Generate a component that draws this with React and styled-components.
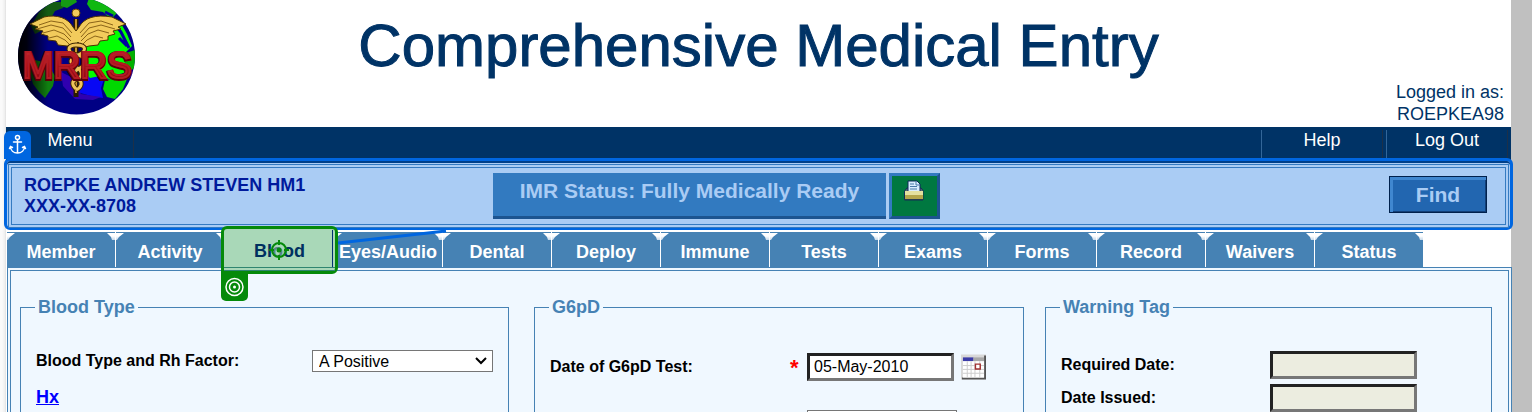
import React from 'react';
import styled, { createGlobalStyle } from 'styled-components';

const Global = createGlobalStyle`
  *, *::before, *::after { box-sizing: border-box; }
  body { margin: 0; background: #c0c0c0; font-family: "Liberation Sans", Arial, sans-serif; }
  #root { height: 100vh; overflow: hidden; }
  button, input, select { font-family: inherit; }
`;

const Window = styled.div`
  display: flex;
  height: 100%;
  padding-right: 21px;
`;
const Edge = styled.div`
  flex: 0 0 6px;
  background: linear-gradient(to right, #fafafa 2px, #eeeeee 5px, #dddddd);
`;
const Page = styled.main`
  flex: 1;
  min-width: 0;
  display: flex;
  flex-direction: column;
  background: #fff;
`;

const Header = styled.header`
  flex: none;
  display: grid;
  grid-template-columns: 180px 1fr 180px;
  height: 127px;
`;
const Logo = styled.svg`
  display: block;
  width: 120px;
  height: 116px;
  margin-left: 11px;
`;
const Title = styled.h1`
  margin: 12px 0 0;
  text-align: center;
  font-size: 60px;
  line-height: 68px;
  font-weight: 400;
  color: #003366;
  -webkit-text-stroke: 1px #003366;
  white-space: nowrap;
`;
const Login = styled.p`
  align-self: end;
  margin: 0;
  padding: 0 7px 2px 0;
  text-align: right;
  font-size: 18px;
  line-height: 22px;
  color: #003366;
`;

const Nav = styled.nav`
  flex: none;
  display: flex;
  height: 36px;
  background: #003366;
`;
const NavLink = styled.a`
  width: 122px;
  height: 28px;
  margin: 3px 3px 0 0;
  color: #fff;
  font-size: 18px;
  line-height: 20px;
  text-align: center;
  text-decoration: none;
  border-left: 1px solid #336699;
  border-right: 1px solid #1d3048;
`;
const MenuLink = styled(NavLink)`
  width: 128px;
  border-left-color: transparent;
`;
const Spacer = styled.div`flex: 1;`;

const PatientBar = styled.section`
  flex: none;
  position: relative;
  display: flex;
  align-items: flex-start;
  height: 72px;
  margin: -5px -2px 0;
  border: 3px solid #0066e0;
  border-radius: 6px;
  background: #aaccf4;
  box-shadow: inset 0 2px #00408a;
  padding: 3px 1px 0;
`;
const PatientFrame = styled.div`
  flex: 1;
  display: flex;
  height: 64px;
  padding: 5px 18px 0 12px;
  border: 4px double #357bc1;
`;
const Patient = styled.div`
  flex: 6 1 0;
  font-size: 18px;
  line-height: 21px;
  font-weight: 700;
  padding-top: 2px;
  color: #001a9c;
`;
const StatusGroup = styled.div`
  display: flex;
  gap: 3px;
`;
const ImrStatus = styled.div`
  width: 393px;
  height: 46px;
  background: #327ac0;
  border-bottom: 3px solid #1c5490;
  color: #aaccf4;
  font-size: 21px;
  line-height: 36px;
  font-weight: 700;
  text-align: center;
`;
const PrintButton = styled.button`
  display: flex;
  justify-content: center;
  width: 51px;
  height: 46px;
  padding: 4px 0 0;
  background: #007840;
  border: 3px solid;
  border-color: #327ac0 #1c5490 #1c5490 #327ac0;
`;
const FindSide = styled.div`
  flex: 7 1 0;
  display: flex;
  justify-content: flex-end;
  padding-top: 3px;
`;
const FindButton = styled.button`
  width: 98px;
  height: 37px;
  padding: 0;
  border: 1px solid #00214d;
  background: #2266b0;
  box-shadow: inset 3px 3px #4087d0, inset -1px -1px #123f78;
  color: #aaccf4;
  font-size: 21px;
  line-height: 24px;
  font-weight: 700;
`;

const TabBar = styled.div`
  flex: none;
  position: relative;
  display: flex;
  height: 35px;
  margin-top: 2px;
`;
const Tab = styled.button`
  position: relative;
  flex: 0 0 109px;
  padding: 2px 0 0;
  border: 0;
  border-left: 1px solid #fff;
  background: #4682b4;
  color: #fff;
  font-size: 18px;
  line-height: 37px;
  font-weight: 700;
  white-space: nowrap;
  &::before,
  &::after {
    content: "";
    position: absolute;
    top: 0;
    width: 8px;
    height: 8px;
    background: linear-gradient(#fff 4px, #c4d8ea);
  }
  &::before {
    left: 0;
    clip-path: polygon(0 1px, 100% 1px, 3px 5px, 1px 100%, 0 100%);
  }
  &::after {
    right: 0;
    clip-path: polygon(0 1px, 100% 1px, 100% 100%, 5px 100%, 4px 5px);
  }
`;

const Highlight = styled.div`
  position: absolute;
  left: 215px;
  top: -6px;
  width: 117px;
  height: 48px;
  border: 3px solid #058a0a;
  border-radius: 6px 6px 6px 0;
  background: #a9d8b8;
  color: #003060;
  font-size: 18px;
  font-weight: 700;
  line-height: 44px;
  text-align: center;
  &::before {
    content: "";
    position: absolute;
    left: 0;
    right: 0;
    bottom: 0;
    height: 4px;
    border-top: 1px solid #2f8570;
    border-bottom: 1px solid #2f8570;
  }
  &::after {
    content: "";
    position: absolute;
    right: 2px;
    top: 1px;
    bottom: 4px;
    width: 1px;
    background: #003070;
  }
`;
const Target = styled.svg`
  position: absolute;
  left: 45px;
  top: 11px;
  width: 20px;
  height: 20px;
`;
const Badge = styled.svg`
  position: absolute;
  left: ${p => p.$x}px;
  top: ${p => p.$y}px;
  width: 27px;
  height: 28px;
`;
const Connector = styled.svg`
  position: absolute;
  left: 332px;
  top: -4px;
  width: 110px;
  height: 18px;
`;

const Panel = styled.section`
  flex: 1;
  min-height: 0;
  display: grid;
  grid-template-columns: 514fr 511fr 447fr;
  margin: 0 -1px 0 1px;
  padding: 26px 16px 0 9px;
  border: 4px double #4682b4;
  border-bottom: 0;
  background: #f0f8ff;
`;
const Group = styled.fieldset`
  min-width: 0;
  margin: 0 ${p => p.$gap}px 0 0;
  padding: ${p => p.$top}px 15px 0;
  border: 1px solid #4682b4;
  border-bottom: 0;
`;
const Legend = styled.legend`
  margin-left: -1px;
  padding: 0 3px;
  font-size: 18px;
  line-height: 20px;
  font-weight: 700;
  color: #4682b4;
`;
const Row = styled.div`
  display: flex;
  align-items: center;
  height: ${p => p.$height || 33}px;
`;
const Label = styled.label`
  flex: 0 0 ${p => p.$width}px;
  font-size: 16px;
  line-height: 20px;
  font-weight: 700;
  color: #000;
`;
const Star = styled.span`
  width: 22px;
  padding: 2px 0 0 5px;
  color: #f00;
  font-size: 22px;
  line-height: 22px;
  font-weight: 700;
`;
const Field = styled.input`
  width: 147px;
  height: 28px;
  padding: 0 4px;
  border: 3px solid;
  border-color: #222222 #777777 #777777 #222222;
  border-radius: 0;
  background: ${p => (p.readOnly ? '#ecede0' : '#fff')};
  color: #000;
  font-size: 16px;
`;
const SelectBox = styled.span`
  position: relative;
  display: flex;
  svg {
    position: absolute;
    right: 5px;
    top: 6px;
    pointer-events: none;
  }
`;
const Select = styled.select`
  appearance: none;
  width: ${p => p.$width}px;
  height: 22px;
  padding: 0 6px;
  border: 1px solid #767676;
  border-radius: 0;
  background: #fff;
  color: #000;
  font-size: 16px;
`;
const Later = styled.div`
  padding: 27px 0 0 257px;
`;
const History = styled.a`
  font-size: 18px;
  line-height: 20px;
  font-weight: 700;
  color: #0000ff;
  text-decoration: underline;
`;
const IconButton = styled.button`
  display: flex;
  margin-left: 7px;
  padding: 0;
  border: 0;
  background: none;
`;

const MrrsLogo = () => (
  <Logo viewBox="0 0 120 116" role="img" aria-label="MRRS">
    <defs>
      <clipPath id="globe"><circle cx="59.500" cy="56" r="58.500" /></clipPath>
      <linearGradient id="shade">
        <stop offset="0" stopColor="#000" />
        <stop offset="0.08" stopColor="#000" stopOpacity="0.9" />
        <stop offset="0.26" stopColor="#000" stopOpacity="0" />
      </linearGradient>
      <linearGradient id="red" x2="0" y2="1">
        <stop offset="0" stopColor="#d03038" />
        <stop offset="0.5" stopColor="#a81018" />
        <stop offset="1" stopColor="#780008" />
      </linearGradient>
    </defs>
    <g clipPath="url(#globe)">
      <rect width="120" height="116" fill="#000084" />
      <path d="M62 78l14-4 12 2-4 12 2 10-12-2-14-4z" fill="#0808f4" />
      <path d="M44 72l12 6 8 16 20 3-8 3-18-1-12-13z" fill="#3000b0" />
      <path d="M14 26L22 12 34 2h16l-4 6-8 3-4 7-6 4-2 8-8 4z" fill="#145c14" />
      <path d="M44-2h14l2 4-10 6-6-2z" fill="#149a14" />
      <path d="M72-2h14l8 7 6 8-6 6-8-7-12-2-4-6z" fill="#10b810" />
      <path d="M66 46l8-6 14-6 8-12 6-2 8 14 5 12-6 6 4 10-2 10-8 2-8 6-12-4-10 2-6-6z" fill="#00ff00" />
      <path d="M94 20l10 12 8 16M88 12l8 4M102 38l8 8" stroke="#0000a0" strokeWidth="3" fill="none" />
      <path d="M88 80l14-2 8 1-4 10-8 10-8-2-4-8z" fill="#00d800" />
      <path d="M18 60l8 2 6 4 6 10-2 10-8 12-6-6-6-8-4-14z" fill="#108010" />
      <path d="M106 54l12-4v18l-8 4z" fill="#00b000" />
      <rect width="120" height="116" fill="url(#shade)" />
    </g>
    <path d="M59 19v78" stroke="#2a1c00" strokeWidth="5" />
    <path d="M59 19v74" stroke="#c89430" strokeWidth="2" />
    <path d="M56 27C51 18 40 14 27 17l-14 7 8 3-3 2 8 2-2 3 7 2 0 4 8 1 2 4 9 1 7 2 4-6 4 6 7-2 9-1 2-4 8-1 0-4 7-2-2-3 8-2-3-2 8-3-14-7C78 14 67 18 62 27l-3 4z" fill="#f2cb5c" stroke="#4b3200" />
    <path d="M22 25l12-4 12 2 9 10M20 29l14-4 12 3 8 9M26 33l11-3 10 4 7 7M32 38l8-2 8 4 5 5M96 25l-12-4-12 2-9 10M98 29l-14-4-12 3-8 9M92 33l-11-3-10 4-7 7M86 38l-8-2-8 4-5 5" stroke="#8a6418" fill="none" />
    <path d="M59 45c-10 0-9 8 1 10s12 8 3 13-7 8-2 11 4 8-2 11M59 45c11 0 11 6 2 10s-9 8-2 12 7 10 1 12-5 6-1 10" fill="none" stroke="#3c2600" strokeWidth="5" />
    <path d="M59 45c-10 0-9 8 1 10s12 8 3 13-7 8-2 11 4 8-2 11M59 45c11 0 11 6 2 10s-9 8-2 12 7 10 1 12-5 6-1 10" fill="none" stroke="#eec45a" strokeWidth="3" />
    <circle cx="59" cy="13" r="4" fill="#f2cb5c" stroke="#6b4700" />
    <text x="60" y="79" textAnchor="middle" fontFamily="Liberation Sans, Arial, sans-serif" fontSize="37" fill="url(#red)" stroke="#5c0008" strokeWidth="4" paintOrder="stroke">MRRS</text>
    <text x="60" y="78" textAnchor="middle" fontFamily="Liberation Sans, Arial, sans-serif" fontSize="37" fill="url(#red)" stroke="#b41c24" strokeWidth="2" aria-hidden="true">MRRS</text>
  </Logo>
);

const Printer = () => (
  <svg width="22" height="22" viewBox="0 0 22 22" aria-hidden="true">
    <path d="M2 10.500L4 8h14l2 2.500V20H1.500v-8z" fill="#5c6878" stroke="#142c54" />
    <path d="M5 1h9l3 3v8H5z" fill="#d8ecff" stroke="#0c2858" />
    <path d="M13 1v4h4M7 4h4M7 6.500h7M7 9h7" fill="none" stroke="#4878a8" />
    <path d="M2 11h18v4H2z" fill="#e4e0a0" />
    <path d="M2 15h18v4H2z" fill="#b4a64c" />
    <path d="M1.500 19.500h19" stroke="#283c50" />
  </svg>
);

const Calendar = () => (
  <svg width="25" height="26" viewBox="0 0 26 26" aria-hidden="true">
    <path d="M0 0h26v26H0z" fill="#d8d8d8" />
    <path d="M25 1v24H1" fill="none" stroke="#555" strokeWidth="2" />
    <path d="M2 3h11v4H2z" fill="#3c3ca8" />
    <path d="M13 3h11v4H13z" fill="#a8a8a8" />
    <path d="M2 7h22v17H2z" fill="#fff" />
    <path d="M2 11.500h22M2 15.500h22M2 19.500h22M6.500 7v17M10.500 7v17M14.500 7v17M19.500 7v17" stroke="#ccc" />
    <path d="M15 10h5v5h-5z" fill="#fff" stroke="#a03030" strokeWidth="1.500" />
  </svg>
);

const Anchor = () => (
  <Badge $x={-3} $y={-30} viewBox="0 0 27 28" aria-hidden="true">
    <path d="M0 28V6a6 6 0 016-6h15a6 6 0 016 6v22z" fill="#0066e0" />
    <g fill="none" stroke="#fff" strokeWidth="1.500" strokeLinecap="round">
      <circle cx="13.500" cy="6.500" r="2" />
      <path d="M13.500 8.500v13.500M9.500 11h8M6.500 15.500c0 4 3 6.500 7 6.500s7-2.500 7-6.500M5.500 17.500l1-2 2 1M21.500 17.500l-1-2-2 1" />
    </g>
  </Badge>
);

const tabs = ['Member', 'Activity', 'Blood', 'Eyes/Audio', 'Dental', 'Deploy', 'Immune', 'Tests', 'Exams', 'Forms', 'Record', 'Waivers', 'Status'];

export default function App() {
  return (
    <>
      <Global />
      <Window>
        <Edge />
        <Page>
          <Header>
            <MrrsLogo />
            <Title>Comprehensive Medical Entry</Title>
            <Login>Logged in as:<br />ROEPKEA98</Login>
          </Header>
          <Nav>
            <MenuLink href="#menu">Menu</MenuLink>
            <Spacer />
            <NavLink href="#help">Help</NavLink>
            <NavLink href="#logout">Log Out</NavLink>
          </Nav>
          <PatientBar>
            <Anchor />
            <PatientFrame>
              <Patient>ROEPKE ANDREW STEVEN HM1<br />XXX-XX-8708</Patient>
              <StatusGroup>
                <ImrStatus>IMR Status: Fully Medically Ready</ImrStatus>
                <PrintButton aria-label="Print"><Printer /></PrintButton>
              </StatusGroup>
              <FindSide><FindButton>Find</FindButton></FindSide>
            </PatientFrame>
          </PatientBar>
          <TabBar>
            {tabs.map(name => (
              <Tab key={name} aria-label={name}>{name === 'Blood' ? null : name}</Tab>
            ))}
            <Connector viewBox="0 0 110 18" aria-hidden="true">
              <path d="M0 15L108 3" stroke="#0066e0" strokeWidth="3" />
            </Connector>
            <Highlight>
              Blood
              <Target viewBox="0 0 20 20" aria-hidden="true">
                <circle cx="10" cy="10" r="7" fill="#a9d8b8" fillOpacity="0.5" stroke="#058a0a" strokeWidth="2" />
                <circle cx="10" cy="10" r="2.500" fill="#058a0a" />
                <path d="M10 0v5M10 15v5M0 10h5M15 10h5" stroke="#058a0a" strokeWidth="2" />
              </Target>
              <Badge $x={-3} $y={44} viewBox="0 0 27 28" aria-hidden="true">
                <path d="M0 0h27v23a5 5 0 01-5 5H5a5 5 0 01-5-5z" fill="#058a0a" />
                <g fill="none" stroke="#fff" strokeWidth="1.500">
                  <circle cx="13.500" cy="14" r="8.500" />
                  <circle cx="13.500" cy="14" r="5" />
                  <circle cx="13.500" cy="14" r="1.500" fill="#fff" stroke="none" />
                </g>
              </Badge>
            </Highlight>
          </TabBar>
          <Panel>
            <Group $gap={25} $top={32}>
              <Legend>Blood Type</Legend>
              <Row $height={24}>
                <Label htmlFor="blood" $width={276}>Blood Type and Rh Factor:</Label>
                <SelectBox>
                  <Select id="blood" $width={181}><option>A Positive</option></Select>
                  <svg width="14" height="10" viewBox="0 0 14 10" aria-hidden="true">
                    <path d="M2 2l5 5 5-5" fill="none" stroke="#000" strokeWidth="2" />
                  </svg>
                </SelectBox>
              </Row>
              <Row $height={48}><History href="#history">Hx</History></Row>
            </Group>
            <Group $gap={21} $top={33}>
              <Legend>G6pD</Legend>
              <Row>
                <Label htmlFor="g6pd" $width={235}>Date of G6pD Test:</Label>
                <Star>*</Star>
                <Field id="g6pd" defaultValue="05-May-2010" />
                <IconButton aria-label="Pick a date"><Calendar /></IconButton>
              </Row>
              <Later><Select aria-label="G6pD result" $width={150} /></Later>
            </Group>
            <Group $gap={0} $top={31}>
              <Legend>Warning Tag</Legend>
              <Row>
                <Label htmlFor="required" $width={209}>Required Date:</Label>
                <Field id="required" readOnly />
              </Row>
              <Row>
                <Label htmlFor="issued" $width={209}>Date Issued:</Label>
                <Field id="issued" readOnly />
              </Row>
            </Group>
          </Panel>
        </Page>
      </Window>
    </>
  );
}
